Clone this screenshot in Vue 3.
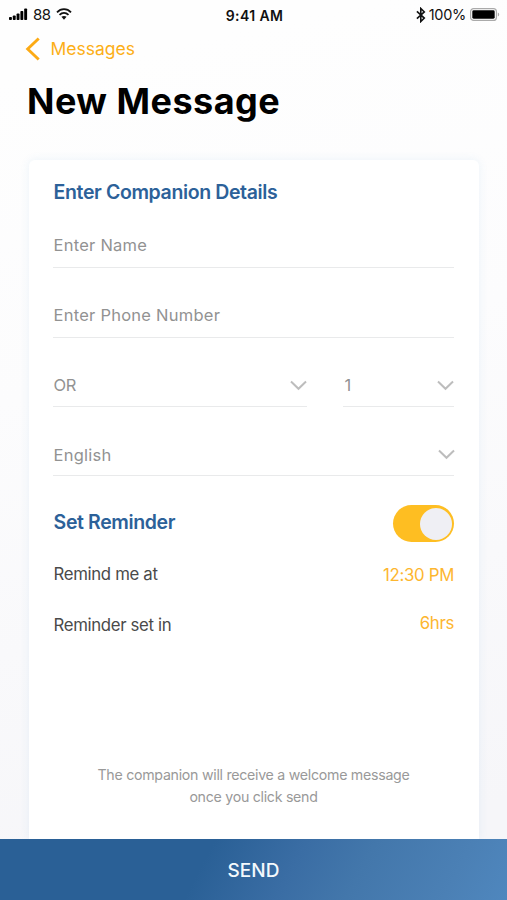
<script setup>
import { ref } from 'vue'

const reminderOn = ref(true)
const bars = [3, 4.5, 6.5, 9, 11.5]
</script>

<template>
  <main class="screen">
    <div class="status">
      <div class="status-left">
        <svg class="signal" width="19" height="12" viewBox="0 0 19 12">
          <rect v-for="(h, i) in bars" :key="i" :x="i * 3.8" :y="12 - h" width="2.9" :height="h" rx="0.8" />
        </svg>
        <span class="carrier">88</span>
        <svg class="wifi" width="16" height="12" viewBox="0 0 16 12" fill="none" stroke="#111" stroke-width="1.8">
          <path d="M1 4.3C5 .1 11 .1 15 4.3M3.5 6.9c2.7-2.6 6.3-2.6 9 0" />
          <path d="M5.4 8.8c1.6-1.2 3.6-1.2 5.2 0L8 11.7z" fill="#111" stroke="none" />
        </svg>
      </div>
      <span class="clock">9:41 AM</span>
      <div class="status-right">
        <svg width="10" height="16" viewBox="0 0 10 16" fill="none" stroke="#111" stroke-width="1.6">
          <path d="M.9 4.4 8.3 11.1 4.8 14.5V1.5L8.3 4.9.9 11.6" />
        </svg>
        <span class="percent">100%</span>
        <svg class="battery" width="30" height="13" viewBox="0 0 30 13">
          <rect x=".6" y=".6" width="25.8" height="11.8" rx="3" fill="#fff" stroke="#aaa" stroke-width="1.2" />
          <rect x="2.3" y="2.3" width="22.4" height="8.4" rx="1.4" fill="#000" />
          <path d="M27.8 4.500v4c1.900-.8 1.900-3.200 0-4z" fill="#aaa" />
        </svg>
      </div>
    </div>

    <nav class="back">
      <svg width="15" height="24" viewBox="0 0 15 24" fill="none" stroke="#fcaa14" stroke-width="2.9">
        <path d="M13.700 1.500 2.700 12l11 10.500" />
      </svg>
      <span>Messages</span>
    </nav>
    <h1>New Message</h1>

    <section class="card">
      <h2 class="details">Enter Companion Details</h2>
      <div class="field">Enter Name</div>
      <div class="field phone">Enter Phone Number</div>
      <div class="pair">
        <div class="field tight">
          OR
          <svg class="chevron" width="17" height="11" viewBox="0 0 17 11"><path d="M1 1.500l7.500 7.300L16 1.500" /></svg>
        </div>
        <div class="field count">
          1
          <svg class="chevron" width="17" height="11" viewBox="0 0 17 11"><path d="M1 1.500l7.500 7.300L16 1.500" /></svg>
        </div>
      </div>
      <div class="field language">
        English
        <svg class="chevron" width="17" height="11" viewBox="0 0 17 11"><path d="M1 1.500l7.500 7.300L16 1.500" /></svg>
      </div>

      <div class="reminder">
        <h2>Set Reminder</h2>
        <button class="toggle" :class="{ on: reminderOn }" @click="reminderOn = !reminderOn"><i /></button>
      </div>
      <div class="row first">
        <span class="label">Remind me at</span>
        <span class="value">12:30 PM</span>
      </div>
      <div class="row second">
        <span class="label">Reminder set in</span>
        <span class="value">6hrs</span>
      </div>

      <p class="note">The companion will receive a welcome message<br />once you click send</p>
    </section>

    <button class="send">SEND</button>
  </main>
</template>

<style>
body {
  margin: 0;
}
</style>

<style scoped>
.screen {
  display: flex;
  flex-direction: column;
  width: 507px;
  height: 900px;
  overflow: hidden;
  font-family: Inter, sans-serif;
  background: linear-gradient(168deg, #fefefe 8%, #fcfcfd 40%, #f6f6f9 90%);
}
h1,
h2,
p {
  margin: 0;
}
button {
  border: 0;
  padding: 0;
  font-family: inherit;
}
svg {
  flex: none;
  display: block;
}
.status {
  display: grid;
  grid-template-columns: 1fr auto 1fr;
  align-items: center;
  height: 29px;
  padding: 0 7px 0 9px;
  color: #111;
  font-size: 15px;
  line-height: 29px;
}
.status-left,
.status-right {
  display: flex;
  align-items: center;
}
.status-left {
  height: 28px;
  align-self: start;
}
.status-right {
  justify-content: flex-end;
}
.carrier {
  margin-left: 5px;
  letter-spacing: -0.6px;
}
.wifi {
  margin-left: 6px;
}
.clock {
  height: 29px;
  line-height: 31px;
  font-weight: 600;
  font-size: 14px;
  letter-spacing: 0.4px;
}
.percent {
  margin-left: 3px;
  font-size: 14.500px;
  letter-spacing: -0.3px;
}
.battery {
  margin-left: 4px;
}
.back {
  display: flex;
  align-items: center;
  height: 39px;
  padding-left: 25px;
  gap: 10.500px;
  color: #fcaf17;
  font-size: 17.500px;
}
.back span {
  line-height: 22px;
}
h1 {
  height: 92px;
  padding-left: 27px;
  font-size: 36px;
  font-weight: 700;
  line-height: 66px;
  letter-spacing: 0.48px;
  color: #000;
  box-sizing: border-box;
}
.card {
  flex: 1;
  display: flex;
  flex-direction: column;
  margin: 0 28px 0 29px;
  padding: 0 25px 0 24px;
  background: #fff;
  border-radius: 6px 6px 0 0;
  box-shadow: 0 0 10px rgba(70, 150, 210, 0.1);
}
h2 {
  padding-left: 0.6px;
  font-size: 19.500px;
  font-weight: 600;
  color: #2c6199;
  letter-spacing: -0.38px;
}
.details {
  height: 51px;
  line-height: 64px;
}
.field {
  display: flex;
  align-items: center;
  justify-content: space-between;
  height: 69.500px;
  padding: 27px 0 0 0.500px;
  box-sizing: border-box;
  border-bottom: 1.500px solid #e9eaeb;
  color: #929292;
  font-size: 16.500px;
  letter-spacing: 0.25px;
}
.details + .field {
  height: 57px;
  padding-top: 12.500px;
}
.phone {
  padding-top: 25px;
}
.tight {
  letter-spacing: -0.3px;
}
.count {
  padding-left: 1.500px;
}
.language {
  height: 69px;
}
.pair {
  display: grid;
  grid-template-columns: 254px 111px;
  justify-content: space-between;
}
.chevron {
  fill: none;
  stroke: #bdbdbd;
  stroke-width: 2;
}
.language .chevron {
  margin-right: -1px;
}
.reminder {
  display: flex;
  align-items: center;
  justify-content: space-between;
  height: 37px;
  margin-top: 29px;
}
.reminder h2 {
  padding-bottom: 3px;
}
.toggle {
  display: flex;
  align-items: center;
  width: 61.500px;
  height: 37px;
  padding: 0 2px;
  border-radius: 19px;
  background: #ddd;
}
.toggle.on {
  justify-content: flex-end;
  background: #febe22;
}
.toggle i {
  width: 32px;
  height: 32px;
  border-radius: 50%;
  background: #efeff4;
}
.row {
  display: flex;
  justify-content: space-between;
  font-size: 16.800px;
  line-height: 24px;
}
.label {
  padding-left: 0.500px;
  color: #4a4a4a;
  letter-spacing: -0.34px;
}
.value {
  color: #fdb62f;
  letter-spacing: -0.3px;
}
.first {
  margin-top: 20px;
}
.first .value {
  padding-top: 1px;
}
.second {
  margin-top: 26px;
}
.second .value {
  margin-top: -2px;
}
.note {
  margin-top: auto;
  padding-bottom: 31px;
  color: #999;
  font-size: 14.200px;
  letter-spacing: -0.28px;
  line-height: 22px;
  text-align: center;
}
.send {
  height: 61px;
  flex: none;
  padding-top: 1px;
  color: #f4f9fd;
  font-size: 19px;
  font-weight: 500;
  background: linear-gradient(118deg, #2a6096 40%, #3a6da4 57%, #4377ab 70%, #4b80b5 88%, #4f87be);
}
</style>
